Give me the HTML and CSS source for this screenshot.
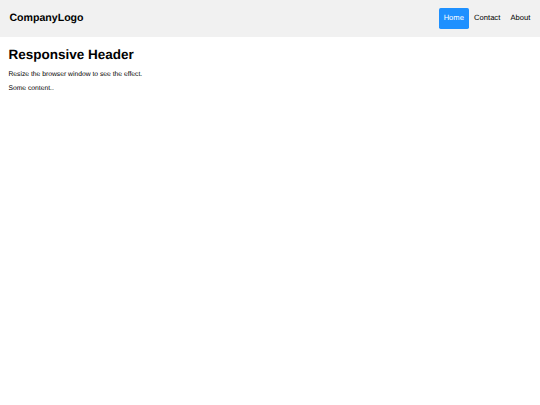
FILE: index.html
```
<!DOCTYPE html>
<html>
<head>
<meta charset="utf-8">
<link rel="stylesheet" href="styles.css">
</head>
<body>
<div class="header">
  <a href="#default" class="logo">CompanyLogo</a>
  <div class="header-right">
    <a class="active" href="#home">Home</a>
    <a href="#contact">Contact</a>
    <a href="#about">About</a>
  </div>
</div>
<div class="content">
  <h1>Responsive Header</h1>
  <p>Resize the browser window to see the effect.</p>
  <p>Some content..</p>
</div>
</body>
</html>
```
FILE: styles.css
```
body {
  margin: 0;
  font-family: "Liberation Sans", Arial, Helvetica, sans-serif;
  font-size: 6.75px;
  color: #000;
  text-rendering: geometricPrecision;
}
.header {
  display: flex;
  justify-content: space-between;
  align-items: center;
  background-color: #f1f1f1;
  padding: 8.4px 4.6px 8.4px 4.3px;
}
.header a {
  display: block;
  color: #000;
  text-align: center;
  padding: 5.1px;
  text-decoration: none;
  font-size: 7.6px;
  line-height: 10.5px;
  border-radius: 1.7px;
}
.header a.logo {
  font-size: 10.6px;
  font-weight: bold;
}
.header a.active {
  background-color: #1e90ff;
  color: #fff;
}
.header-right {
  display: flex;
}
.content {
  padding-left: 8.4px;
}
h1 {
  font-size: 13.5px;
  margin: 9.2px 0;
}
p {
  margin: 6.75px 0;
}
```
